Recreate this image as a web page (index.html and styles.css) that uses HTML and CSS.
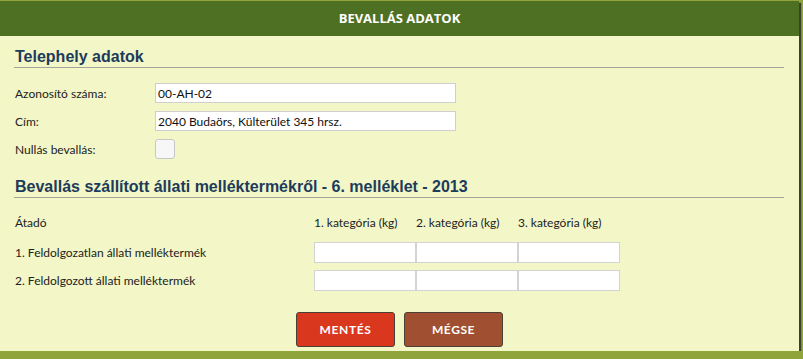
FILE: index.html
```html
<!DOCTYPE html>
<html lang="hu">
<head>
  <meta charset="UTF-8" />
  <title>Bevallás adatok</title>
  <link rel="stylesheet" href="styles.css">
</head>
<body>

  <div class="panel">
    <div class="panel-head">BEVALLÁS ADATOK</div>

    <div class="panel-body">
      <h2>Telephely adatok</h2>
      <div class="form-grid">
        <label>Azonosító száma:</label>
        <input type="text" class="text-input" value="00-AH-02" />
        <label>Cím:</label>
        <input type="text" class="text-input" value="2040 Budaörs, Külterület 345 hrsz." />
        <label>Nullás bevallás:</label>
        <span class="check"></span>
      </div>

      <h2>Bevallás szállított állati melléktermékről - 6. melléklet - 2013</h2>
      <div class="kg-grid">
        <div class="kg-head">Átadó</div>
        <div class="kg-head">1. kategória (kg)</div>
        <div class="kg-head">2. kategória (kg)</div>
        <div class="kg-head">3. kategória (kg)</div>

        <div class="kg-label">1. Feldolgozatlan állati melléktermék</div>
        <input type="text" class="kg-input" />
        <input type="text" class="kg-input" />
        <input type="text" class="kg-input" />

        <div class="kg-label">2. Feldolgozott állati melléktermék</div>
        <input type="text" class="kg-input" />
        <input type="text" class="kg-input" />
        <input type="text" class="kg-input" />
      </div>

      <div class="buttons">
        <button class="btn btn-save">MENTÉS</button>
        <button class="btn btn-cancel">MÉGSE</button>
      </div>
    </div>
  </div>

</body>
</html>
```

FILE: styles.css
```css
body {
  margin: 0;
  padding-top: 1px;
  background-color: #8fa43a;
  font-family: 'Lato', 'Open Sans', sans-serif;
  font-size: 12px;
  color: #222;
}

.panel {
  width: 799px;
  height: 350px;
  background-color: #f3f6c6;
  box-shadow: 2px 2px 1px rgba(40,40,40,0.8);
}

.panel-head {
  height: 35px;
  line-height: 35px;
  background-color: #4e7023;
  color: white;
  text-align: center;
  font-family: 'Open Sans', sans-serif;
  font-weight: bold;
  font-size: 13px;
}

.panel-body {
  padding: 10px 15px 0 14px;
}

h2 {
  font-family: 'Liberation Sans', Arial, sans-serif;
  font-size: 16px;
  line-height: 18px;
  color: #1d3b5b;
  margin: 0 0 15px 0;
  padding: 2px 0 1px 1px;
  border-bottom: 1px solid #a3a39b;
}

.form-grid {
  display: grid;
  grid-template-columns: 140px 301px;
  row-gap: 8px;
  align-items: center;
  padding-left: 1px;
  margin-bottom: 17px;
}

.text-input {
  box-sizing: border-box;
  height: 20px;
  border: 1px solid #cfcfcf;
  background: white;
  font-family: inherit;
  font-size: 12px;
  padding: 0 2px;
  color: #111;
}

.check {
  box-sizing: border-box;
  width: 20px;
  height: 20px;
  border: 1px solid #c8c8c8;
  border-radius: 3px;
  background: #f7f7f7;
}

.kg-grid {
  display: grid;
  grid-template-columns: 299px 102px 102px 102px;
  align-items: center;
  padding-left: 1px;
}

.kg-head {
  height: 20px;
  line-height: 20px;
  margin-bottom: 9px;
}

.kg-label {
  line-height: 21px;
  margin-bottom: 7px;
}

.kg-input {
  box-sizing: border-box;
  height: 21px;
  margin-bottom: 7px;
  border: 1px solid #d3d3d3;
  background: white;
}

.buttons {
  display: flex;
  justify-content: center;
  gap: 9px;
  margin-top: 14px;
  padding-left: 1px;
}

.btn {
  width: 99px;
  height: 35px;
  border: 1px solid #4a4036;
  border-radius: 3px;
  color: white;
  font-family: 'Lato', sans-serif;
  font-size: 12px;
  font-weight: bold;
  letter-spacing: 0.6px;
}

.btn-save {
  background-color: #da381e;
}

.btn-cancel {
  background-color: #a04f30;
}
```
